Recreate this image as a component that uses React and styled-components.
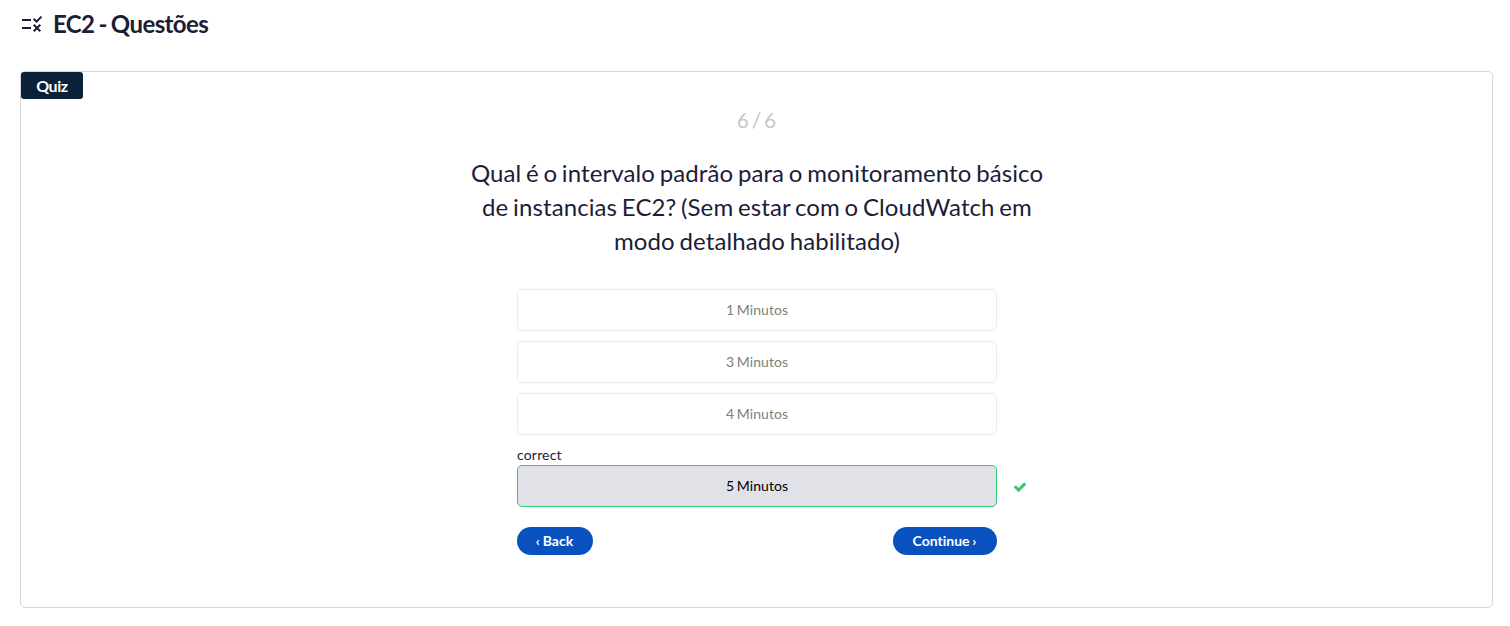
import React from 'react';
import styled, { createGlobalStyle } from 'styled-components';

const GlobalStyle = createGlobalStyle`
  * { box-sizing: border-box; }
  body {
    margin: 0;
    background: #fff;
    color: #1c1d37;
    font-family: Lato, "Liberation Sans", sans-serif;
    font-size: 14px;
    font-variant-ligatures: none;
  }
`;

const Page = styled.main`
  padding: 4px 17px 18px 20px;
`;

const Header = styled.header`
  display: flex;
  align-items: center;
  gap: 9px;
  height: 40px;
  margin-bottom: 27px;
`;

const RuleIcon = styled.svg`
  width: 24px;
  height: 24px;
  fill: currentColor;
`;

const Title = styled.h1`
  margin: 0;
  font-size: 24px;
  font-weight: 700;
  line-height: 40px;
  letter-spacing: -0.6px;
  word-spacing: -1.2px;
`;

const Panel = styled.section`
  height: 537px;
  border: 1px solid #d6d6d9;
  border-radius: 5px;
`;

const Tag = styled.div`
  width: 62px;
  height: 27px;
  border-radius: 3px;
  background: #0a2138;
  color: #fff;
  font-size: 16px;
  font-weight: 700;
  line-height: 28px;
  letter-spacing: -0.4px;
  text-align: center;
`;

const Quiz = styled.div`
  display: flex;
  flex-direction: column;
  align-items: center;
  width: 600px;
  margin: 0 auto;
`;

const Progress = styled.div`
  margin-top: 6px;
  color: #c8c8c8;
  font-size: 21px;
  line-height: 30px;
  word-spacing: -2.5px;
`;

const Question = styled.h2`
  margin: 21px 0 31px;
  padding-left: 1px;
  font-size: 24px;
  font-weight: 400;
  line-height: 34px;
  letter-spacing: 0.1px;
  word-spacing: -1.55px;
  text-align: center;
`;

const Options = styled.div`
  display: flex;
  flex-direction: column;
  gap: 10px;
  width: 480px;
`;

const Answer = styled.div`
  position: relative;
`;

const Option = styled.button`
  display: block;
  width: 100%;
  height: 42px;
  padding: 0 0 0 1px;
  border: 1px solid ${(p) => (p.$correct ? '#2ecc71' : '#ebebeb')};
  border-radius: 5px;
  background: ${(p) => (p.$correct ? '#e1e2e7' : '#fff')};
  color: ${(p) => (p.$correct ? '#000' : '#808080')};
  font: 400 14px/40px Lato, "Liberation Sans", sans-serif;
  letter-spacing: 0.06px;
  word-spacing: -0.9px;
`;

const Status = styled.div`
  height: 20px;
  padding-left: 0.5px;
  line-height: 20px;
  letter-spacing: 0.18px;
`;

const CheckIcon = styled.svg`
  position: absolute;
  left: 496px;
  bottom: 13px;
  width: 14px;
  height: 14px;
  fill: #2ecc71;
`;

const Actions = styled.nav`
  display: flex;
  justify-content: space-between;
  width: 480px;
  margin-top: 20px;
`;

const Pill = styled.button`
  width: ${(p) => p.$width}px;
  height: 28px;
  padding: 0;
  border: 0;
  border-radius: 14px;
  background: #0a51c0;
  color: #fff;
  font: 700 14px/28px Lato, "Liberation Sans", sans-serif;
  font-variant-ligatures: none;
  word-spacing: -0.6px;
`;

const wrongOptions = ['1 Minutos', '3 Minutos', '4 Minutos'];

export default function App() {
  return (
    <Page>
      <GlobalStyle />
      <Header>
        <RuleIcon viewBox="0 0 24 24" aria-hidden="true">
          <path d="M16.54 11L13 7.46l1.41-1.41 2.12 2.12 4.24-4.24 1.41 1.41L16.54 11zM11 7H2v2h9V7zm10 6.41L19.59 12 17 14.59 14.41 12 13 13.41 15.59 16 13 18.59 14.41 20 17 17.41 19.59 20 21 18.59 18.41 16 21 13.41zM11 15H2v2h9v-2z" />
        </RuleIcon>
        <Title>EC2 - Questões</Title>
      </Header>
      <Panel>
        <Tag>Quiz</Tag>
        <Quiz>
          <Progress>6 / 6</Progress>
          <Question>
            Qual é o intervalo padrão para o monitoramento básico de instancias EC2? (Sem estar com o
            CloudWatch em modo detalhado habilitado)
          </Question>
          <Options>
            {wrongOptions.map((label) => (
              <Option key={label}>{label}</Option>
            ))}
            <Answer>
              <Status>correct</Status>
              <Option $correct>5 Minutos</Option>
              <CheckIcon viewBox="0 0 1792 1792" aria-hidden="true">
                <path d="M1671 566q0 40-28 68l-724 724-136 136q-28 28-68 28t-68-28l-136-136-362-362q-28-28-28-68t28-68l136-136q28-28 68-28t68 28l294 295 656-657q28-28 68-28t68 28l136 136q28 28 28 68z" />
              </CheckIcon>
            </Answer>
          </Options>
          <Actions>
            <Pill $width={76}>‹ Back</Pill>
            <Pill $width={104}>Continue ›</Pill>
          </Actions>
        </Quiz>
      </Panel>
    </Page>
  );
}
